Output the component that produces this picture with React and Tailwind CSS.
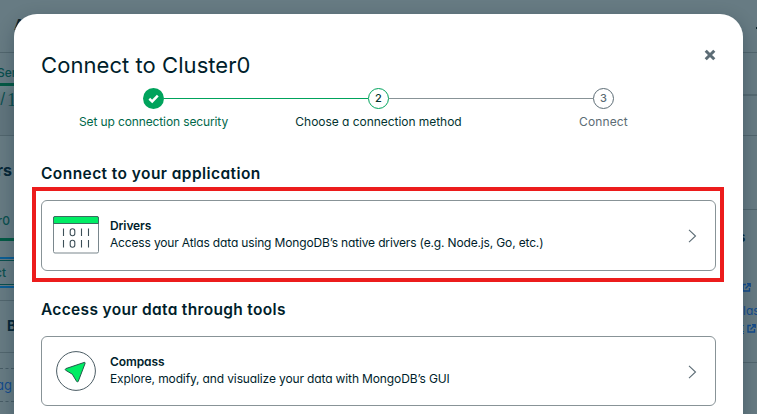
import React from "react";

function CheckBadge() {
  return (
    <span className="flex size-[21px] items-center justify-center rounded-full bg-[#00a35c]">
      <svg width="13" height="13" viewBox="0 0 13 13" fill="none">
        <path d="M2.300 6.800 5.200 9.400 10.800 3.600" stroke="#fff" strokeWidth="2.500" />
      </svg>
    </span>
  );
}

function NumberBadge({ n, className }) {
  return (
    <span className={`flex size-[21px] items-center justify-center rounded-full border text-[11px] leading-none font-medium ${className}`}>
      {n}
    </span>
  );
}

function Step({ badge, children, className }) {
  return (
    <li className="flex w-[225px] flex-col items-center">
      {badge}
      <span className={`mt-[5px] whitespace-nowrap text-[12px] leading-[16px] ${className}`}>{children}</span>
    </li>
  );
}

function Stepper() {
  return (
    <ol className="mt-[10px] flex h-[42px]">
      <Step badge={<CheckBadge />} className="tracking-[-0.120px] text-[#00684a]">Set up connection security</Step>
      <li className="-mx-[102px] mt-[10px] h-px w-[204px] shrink-0 bg-[#00a35c]" />
      <Step badge={<NumberBadge n="2" className="border-[#00a35c] text-[#023430]" />} className="tracking-[-0.040px] text-[#023430]">
        Choose a connection method
      </Step>
      <li className="-mx-[102px] mt-[10px] h-px w-[204px] shrink-0 bg-[#889397]" />
      <Step badge={<NumberBadge n="3" className="border-[#5c6c75] text-[#5c6c75]" />} className="tracking-[0.120px] text-[#5c6c75]">
        Connect
      </Step>
    </ol>
  );
}

function DriversIcon() {
  return (
    <svg width="46" height="38" viewBox="0 0 46 38" fill="none">
      <rect x="0.5" y="0.5" width="45" height="36.500" rx="1.500" fill="#fff" stroke="#7a878d" />
      <path d="M.5 7.500V2A1.500 1.500 0 0 1 2 .5H44a1.500 1.500 0 0 1 1.500 1.500V7.500Z" fill="#00ed64" stroke="#3b6b60" />
      <g stroke="#3d4f58" strokeWidth="1.100">
        <path d="M10.500 12.500v7.500M28.500 12.500v7.500M35.500 12.500v7.500M10.500 24v7.500M28.500 24v7.500M35.500 24v7.500" />
        <rect x="17.200" y="12.800" width="4.600" height="7" rx="2.200" />
        <rect x="17.200" y="24.300" width="4.600" height="7" rx="2.200" />
      </g>
    </svg>
  );
}

function CompassIcon() {
  return (
    <svg width="40" height="40" viewBox="0 0 40 40" fill="none">
      <circle cx="20" cy="20" r="19.400" stroke="#4a5b63" />
      <path d="M28.300 11.400 9.900 17.600q-1.200.6-.3 1.600l6.700 4 4.400 7.300q1 1 1.600-.3l6.800-17.800q.2-1.200-.8-1Z" fill="#00ed64" stroke="#23594c" strokeLinejoin="round" />
    </svg>
  );
}

function Chevron() {
  return (
    <svg width="9" height="14" viewBox="0 0 9 14" fill="none" className="mt-[2px] mr-[18px] ml-auto">
      <path d="M1 .8 7.500 7 1 13.200" stroke="#5c6c75" strokeWidth="1.100" />
    </svg>
  );
}

function OptionCard({ icon, title, text, className, textClass }) {
  return (
    <button className={`flex w-[675px] items-center rounded-[6px] border border-[#889397] bg-white text-left ${className}`}>
      <span className="ml-[11px] flex w-[46px] justify-center">{icon}</span>
      <span className="mb-[3px] ml-[11px] flex flex-col text-[12px] leading-[17px] text-[#001e2b]">
        <span className="font-semibold tracking-[-0.100px]">{title}</span>
        <span className={`whitespace-nowrap ${textClass}`}>{text}</span>
      </span>
      <Chevron />
    </button>
  );
}

function ExternalIcon() {
  return (
    <svg width="9" height="9" viewBox="0 0 9 9" fill="none" stroke="#134b8c" strokeWidth="1.400" className="shrink-0">
      <path d="M4 1.500H1V8h6.500V5M5 .8h3.200V4M8 1 3.500 5.500" />
    </svg>
  );
}

function LeftEdge() {
  return (
    <aside className="flex w-[14px] shrink-0 flex-col whitespace-nowrap leading-none text-[#0a4f4e]">
      <div className="flex h-[53px] items-end border-b border-[#52666e] pb-[20px] pl-[14px] text-[15px] font-semibold text-[#0b222b]">A</div>
      <div className="-ml-[3px] flex h-[30px] items-center pt-[9px] text-[12px] font-medium">Ser</div>
      <div className="h-[3px] shrink-0 bg-[#045a45]" />
      <div className="flex h-[50px] items-start gap-[2px] border-b border-[#52666e] bg-linear-to-b from-[#6b8489] to-[#61757d] to-30% pt-[4px]">
        <span className="w-[5px] text-[15px]">/</span>
        <span className="font-['Liberation_Serif',serif] text-[19px] font-normal">1</span>
      </div>
      <div className="flex h-[70px] items-center justify-end pr-[2px] pb-[3px] text-[16px] font-bold text-[#062737]">rs</div>
      <div className="flex h-[32px] items-center justify-end pr-[4px] pb-[3px] text-[12px] font-medium">r0</div>
      <div className="h-[3px] shrink-0 bg-[#045a45]" />
      <div className="mt-[16px] flex h-[31px] w-[20px] shrink-0 items-center border-y-2 border-[#0c5e94]">
        <div className="-ml-[6px] flex h-[25px] w-[26px] items-center border-y border-[#0a4f4e] pl-[1px] text-[12px] font-medium">ct</div>
      </div>
      <div className="mt-[12px] flex h-[53px] shrink-0 items-center border-y border-[#52666e] pb-[2px] pl-[7px] text-[14px] font-bold text-[#062737]">B</div>
      <div className="mt-[15px] flex h-[34px] shrink-0 items-center justify-end border-y border-dashed border-[#485d66] pr-[2px] text-[13px] text-[#134b8c]">ag</div>
    </aside>
  );
}

function RightEdge() {
  return (
    <aside className="flex w-[14px] shrink-0 flex-col overflow-hidden whitespace-nowrap leading-none text-[#134b8c]">
      <div className="h-[53px] shrink-0 border-b border-[#52666e] pl-[13px] pt-[27px]"><div className="size-[2px] bg-[#0b222b]" /></div>
      <div className="h-[43px] shrink-0 border-b-2 border-[#566a72]" />
      <div className="h-[40px] shrink-0 border-b border-[#52666e]" />
      <div className="h-[74px] shrink-0 border-b border-[#52666e]" />
      <div className="mt-[21px] -ml-[5px] h-[12px] shrink-0 text-[13px] font-bold text-[#062737]">s</div>
      <div className="mt-[40px] -ml-[1px] h-[9px] shrink-0"><ExternalIcon /></div>
      <div className="mt-[13px] h-[13px] shrink-0 text-[12px]">las</div>
      <div className="mt-[5px] flex h-[10px] shrink-0 items-center"><span className="-ml-[3px] w-[7px] text-[12px] underline">t</span><ExternalIcon /></div>
      <div className="mt-[29px] h-px shrink-0 bg-[#52666e]" />
    </aside>
  );
}

export default function App() {
  return (
    <div className="flex h-[414px] w-[757px] overflow-hidden bg-[#677b83] font-[Inter,'Liberation_Sans',sans-serif] [font-feature-settings:'cv11']">
      <LeftEdge />
      <main className="relative z-10 mt-[14px] h-[420px] w-[729px] shrink-0 rounded-t-[23px] bg-white pl-[27px] shadow-[0_6px_18px_rgba(0,30,43,0.3)]">
        <header className="flex h-[64px] items-start justify-between pr-[27px]">
          <h1 className="mt-[37px] text-[22px] leading-[28px] tracking-[0.060px] text-[#001e2b]">Connect to Cluster0</h1>
          <svg width="12" height="12" viewBox="0 0 12 12" className="mt-[35px]">
            <path d="M1.700 1.700 10.300 10.300M10.300 1.700 1.700 10.300" stroke="#5c6c75" strokeWidth="3" />
          </svg>
        </header>
        <Stepper />
        <h2 className="mt-[33px] text-[15.500px] leading-[22px] font-semibold tracking-[0.430px] text-[#001e2b]">Connect to your application</h2>
        <div className="-ml-[9px] mt-[2px] flex h-[95px] w-[692px] items-center border-4 border-[#ec1c1c] pt-[1px] pl-[5px]">
          <OptionCard className="h-[71px]" icon={<DriversIcon />} title="Drivers" text="Access your Atlas data using MongoDB’s native drivers (e.g. Node.js, Go, etc.)" textClass="tracking-[-0.155px]" />
        </div>
        <h2 className="mt-[17px] text-[15.500px] leading-[22px] font-semibold tracking-[0.330px] text-[#001e2b]">Access your data through tools</h2>
        <OptionCard className="mt-[15px] h-[70px]" icon={<CompassIcon />} title="Compass" text="Explore, modify, and visualize your data with MongoDB’s GUI" textClass="tracking-[-0.130px]" />
      </main>
      <RightEdge />
    </div>
  );
}
